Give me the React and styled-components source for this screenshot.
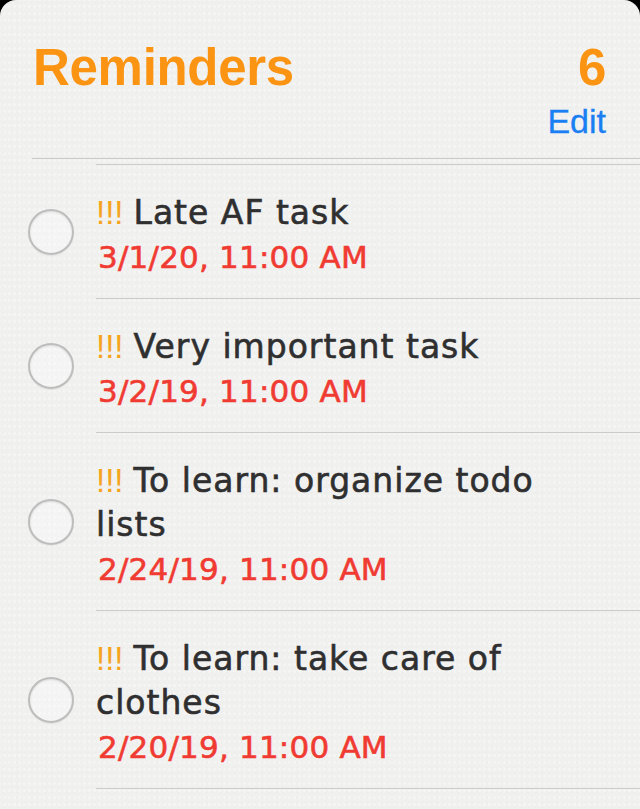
import React from "react";
import styled, { createGlobalStyle } from "styled-components";

const Global = createGlobalStyle`
  html, body {
    margin: 0;
    padding: 0;
    background: #000;
  }
  #root {
    min-height: 100vh;
  }
`;

const Card = styled.div`
  min-height: 809px;
  background-color: #f0f0ef;
  background-image:
    radial-gradient(rgba(0,0,0,0.012) 1px, transparent 1.5px),
    radial-gradient(rgba(255,255,255,0.35) 1px, transparent 1.5px);
  background-size: 7px 5px, 5px 7px;
  background-position: 0 0, 2px 3px;
  border-radius: 16px 16px 0 0;
  overflow: hidden;
`;

const Header = styled.header`
  display: flex;
  flex-direction: column;
  margin-left: 32px;
  padding: 42px 34px 20px 1px;
  border-bottom: 1px solid #c9c9c9;
`;

const TitleRow = styled.div`
  display: flex;
  justify-content: space-between;
  align-items: baseline;
`;

const BigText = styled.h1`
  margin: 0;
  font-family: "Liberation Sans", Arial, sans-serif;
  font-weight: 700;
  font-size: 51px;
  line-height: 51px;
  color: #fb9413;
  letter-spacing: -0.3px;
`;

const EditButton = styled.button`
  align-self: flex-end;
  margin-top: 12px;
  padding: 0;
  border: 0;
  background: none;
  font-family: "Liberation Sans", Arial, sans-serif;
  font-size: 34px;
  line-height: 33px;
  color: #1a7ff2;
  -webkit-text-stroke: 0.3px #1a7ff2;
`;

const List = styled.ul`
  list-style: none;
  margin: 5px 0 0;
  padding: 0;
`;

const Row = styled.li`
  display: flex;
  align-items: center;
`;

const CheckCell = styled.div`
  flex: 0 0 auto;
  width: 96px;
  display: flex;
  justify-content: flex-start;
  padding-left: 28px;
  box-sizing: border-box;
`;

const Circle = styled.span`
  width: 46px;
  height: 46px;
  box-sizing: border-box;
  border-radius: 50%;
  border: 2px solid #bdbdbd;
  box-shadow: inset 0 1px 2px rgba(0,0,0,0.1), 0 1px 1px rgba(0,0,0,0.06);
  background: rgba(255,255,255,0.3);
`;

const Content = styled.div`
  flex: 1 1 auto;
  padding: 26px 48px 19px 0;
  border-bottom: 1px solid #cbcbcb;
  border-top: ${(p) => (p.$first ? "1px solid #cbcbcb" : "0")};
`;

const Title = styled.div`
  font-family: "DejaVu Sans", Verdana, sans-serif;
  font-size: 33px;
  line-height: 44px;
  letter-spacing: 1px;
  color: #2f2f30;
  -webkit-text-stroke: 0.6px #2f2f30;
`;

const Priority = styled.span`
  font-family: "Liberation Sans", Arial, sans-serif;
  letter-spacing: 0;
  color: #f5a41e;
  -webkit-text-stroke: 0;
  margin-right: 10px;
`;

const DueDate = styled.div`
  margin-left: 2px;
  font-family: "DejaVu Sans", Verdana, sans-serif;
  font-size: 31px;
  line-height: 44px;
  letter-spacing: 0.2px;
  color: #f03b33;
  -webkit-text-stroke: 0.6px #f03b33;
`;

const items = [
  { title: "Late AF task", date: "3/1/20, 11:00 AM" },
  { title: "Very important task", date: "3/2/19, 11:00 AM" },
  { title: "To learn: organize todo lists", date: "2/24/19, 11:00 AM" },
  { title: "To learn: take care of clothes", date: "2/20/19, 11:00 AM" },
];

export default function App() {
  return (
    <>
      <Global />
      <Card>
        <Header>
          <TitleRow>
            <BigText>Reminders</BigText>
            <BigText as="span">6</BigText>
          </TitleRow>
          <EditButton>Edit</EditButton>
        </Header>
        <List>
          {items.map((it, i) => (
            <Row key={it.title}>
              <CheckCell>
                <Circle />
              </CheckCell>
              <Content $first={i === 0}>
                <Title>
                  <Priority>!!!</Priority>
                  {it.title}
                </Title>
                <DueDate>{it.date}</DueDate>
              </Content>
            </Row>
          ))}
        </List>
      </Card>
    </>
  );
}
